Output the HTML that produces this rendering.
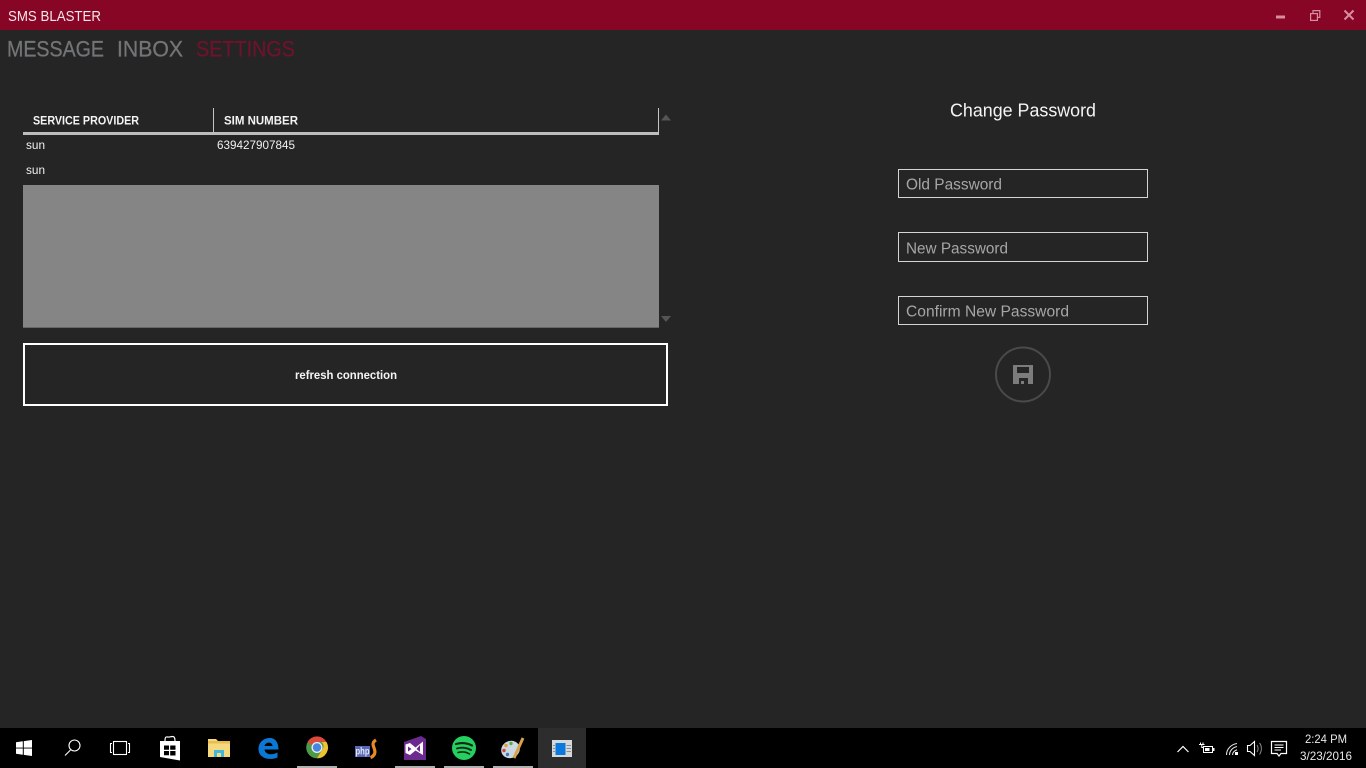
<!DOCTYPE html>
<html><head><meta charset="utf-8"><title>SMS BLASTER</title>
<style>
html,body{margin:0;padding:0;width:1366px;height:768px;overflow:hidden;background:#252525}
svg{display:block}
text{font-family:"Liberation Sans",sans-serif;white-space:pre}
</style></head>
<body>
<svg width="1366" height="768" viewBox="0 0 1366 768" xmlns="http://www.w3.org/2000/svg">
<rect width="1366" height="768" fill="#252525"/>
<!-- title bar -->
<rect width="1366" height="30" fill="#880625"/>
<text x="8" y="21" font-size="15" fill="#f8e6ea" textLength="93" lengthAdjust="spacingAndGlyphs">SMS BLASTER</text>
<rect x="1276" y="15.500" width="9" height="3" fill="#d88ca0"/>
<g fill="none" stroke="#d88ca0" stroke-width="1.200"><rect x="1310.600" y="13.600" width="6.800" height="6.800"/><path d="M1313 13V10.600H1319.800V17.400H1317.600"/></g>
<path d="M1344.500 10.500L1353.500 19.500M1353.500 10.500L1344.500 19.500" stroke="#d88ca0" stroke-width="2" fill="none"/>
<!-- nav -->
<g font-size="22" stroke-width="0.300">
<text x="7" y="56.500" fill="#727476" stroke="#727476" textLength="97" lengthAdjust="spacingAndGlyphs">MESSAGE</text>
<text x="117" y="56.500" fill="#727476" stroke="#727476" textLength="66" lengthAdjust="spacingAndGlyphs">INBOX</text>
<text x="196" y="56.500" fill="#6e132b" stroke="#6e132b" textLength="99" lengthAdjust="spacingAndGlyphs">SETTINGS</text>
</g>
<!-- table -->
<rect x="23" y="132" width="636" height="3" fill="#bdbdbd"/>
<rect x="213" y="108" width="1" height="25" fill="#c4c4c4"/>
<rect x="658" y="108" width="1" height="26" fill="#c4c4c4"/>
<text x="33" y="124.500" font-size="12" font-weight="bold" fill="#f4f4f4" textLength="106" lengthAdjust="spacingAndGlyphs">SERVICE PROVIDER</text>
<text x="224" y="124.500" font-size="12" font-weight="bold" fill="#f4f4f4" textLength="74" lengthAdjust="spacingAndGlyphs">SIM NUMBER</text>
<text x="26" y="149" font-size="12" fill="#f0f0f0" textLength="19" lengthAdjust="spacingAndGlyphs">sun</text>
<text x="217" y="149" font-size="12" fill="#f0f0f0" textLength="78" lengthAdjust="spacingAndGlyphs">639427907845</text>
<text x="26" y="174" font-size="12" fill="#f0f0f0" textLength="19" lengthAdjust="spacingAndGlyphs">sun</text>
<rect x="23" y="185" width="636" height="142" fill="#858585"/>
<rect x="23" y="327" width="636" height="1" fill="#666"/>
<path d="M661 120.500L666 114.500L671 120.500Z" fill="#555"/>
<path d="M661 316L671 316L666 322Z" fill="#555"/>
<!-- refresh -->
<rect x="24" y="344" width="643" height="61" fill="none" stroke="#fff" stroke-width="2"/>
<text x="295" y="379" font-size="12" font-weight="bold" fill="#f4f4f4" textLength="102" lengthAdjust="spacingAndGlyphs">refresh connection</text>
<!-- change password -->
<text x="950" y="116.500" font-size="18" fill="#f4f4f4" textLength="146" lengthAdjust="spacingAndGlyphs">Change Password</text>
<g fill="none" stroke="#d4d4d4" stroke-width="1">
<rect x="898.500" y="169.500" width="249" height="28"/>
<rect x="898.500" y="232.500" width="249" height="29"/>
<rect x="898.500" y="296.500" width="249" height="28"/>
</g>
<g font-size="15.500" fill="#a6a6a6">
<text x="906" y="189.500" textLength="96" lengthAdjust="spacingAndGlyphs">Old Password</text>
<text x="906" y="253.500" textLength="102" lengthAdjust="spacingAndGlyphs">New Password</text>
<text x="906" y="316.500" textLength="163" lengthAdjust="spacingAndGlyphs">Confirm New Password</text>
</g>
<circle cx="1023" cy="374.500" r="27" fill="none" stroke="#4a4a4a" stroke-width="2"/>
<path fill-rule="evenodd" fill="#7c7c7c" d="M1013 365H1033V384H1013ZM1017 367V373H1029V367ZM1019 378V384H1028V378ZM1021 381H1024V384H1021Z"/>
<!-- taskbar -->
<rect y="728" width="1366" height="40" fill="#000"/>
<rect x="538" y="728" width="48" height="40" fill="#2d2d2d"/>
<g fill="#b0b0b0"><rect x="297" y="766" width="40" height="2"/><rect x="395" y="766" width="40" height="2"/><rect x="444" y="766" width="40" height="2"/><rect x="493" y="766" width="40" height="2"/></g>
<!-- start -->
<path fill="#fff" d="M16 742.300L22.800 741.300V747.600H16ZM23.800 741.100L32 740V747.600H23.800ZM16 748.500H22.800V754.800L16 753.800ZM23.800 748.500H32V756L23.800 754.900Z"/>
<!-- search -->
<g fill="none" stroke="#fff" stroke-width="1.100"><circle cx="74.500" cy="745.500" r="5.500"/><path d="M70.500 750L65 755.500"/></g>
<!-- task view -->
<g fill="none" stroke="#fff" stroke-width="1.100"><rect x="113.500" y="741.500" width="13" height="13"/><path d="M112 743.500H110.500V752.500H112M128 743.500H129.500V752.500H128"/></g>
<!-- store -->
<path fill="#fff" d="M160 741H180V760.500L160 757Z"/>
<path fill="none" stroke="#fff" stroke-width="1.200" d="M165 741C165 735 167 737.500 169.500 737C172 736.500 175 735 175 741"/>
<path fill="#000" d="M164 745.500H169V749.800H164ZM170.200 745.500H175.500V749.800H170.200ZM164 751H169V755.200H164ZM170.200 751H175.500V755.500H170.200Z"/>
<!-- explorer -->
<path fill="#f4d97e" d="M208 739H216L218 741H230V757H208Z"/>
<rect x="208" y="741" width="22" height="2.500" fill="#e9bd4f"/>
<path fill="#40b8dc" d="M214 757V750H224V757H221V753H217V757Z"/>
<!-- edge -->
<path fill="#0a78d4" d="M258.500 749C258.500 742 264 738 270 738C275 738 278.500 742 278.500 749.500H264.500C265 754 271 756 277.500 752.500V757.500C269 761 258.500 758 258.500 749ZM264.500 746H272.500C272.500 741.500 265.500 741.500 264.500 746Z" fill-rule="evenodd"/>
<!-- chrome -->
<circle cx="317" cy="747.500" r="10.800" fill="#4c9a45"/>
<path fill="#dd4a3b" d="M307.500 742A10.800 10.800 0 0 1 326.500 742H317A5.500 5.500 0 0 0 312 745Z"/>
<path fill="#f0c22f" d="M326.500 742A10.800 10.800 0 0 1 317 758.300L322 750A5.500 5.500 0 0 0 321.500 742Z"/>
<circle cx="317" cy="747.500" r="5.500" fill="#e8eef8"/><circle cx="317" cy="747.500" r="4.200" fill="#4a86e0"/>
<!-- php -->
<rect x="355" y="746" width="15" height="11" fill="#5a6ab8"/>
<text x="355.500" y="754.500" font-size="10" font-weight="bold" fill="#e6e8f6" textLength="14" lengthAdjust="spacingAndGlyphs">php</text>
<path fill="none" stroke="#e98a24" stroke-width="3.200" d="M376 740C369 744 377 749 374.500 754C373.500 756 372 757 370.500 757.500"/>
<!-- VS -->
<path fill="#6c2a8e" d="M404 742L421 736L426 739V760H404Z"/>
<path fill="#fff" fill-rule="evenodd" d="M405.500 744.500L410 743L415.500 747.500L423 741.500V755L415.500 750.500L410 755L405.500 753ZM408 746.500V751.500L411.500 749ZM420 745L416.500 749L420 752Z"/>
<!-- spotify -->
<circle cx="464" cy="748" r="12" fill="#25d05f"/>
<g fill="none" stroke="#0c2a16" stroke-linecap="round"><path stroke-width="2.200" d="M456 744C461 742.500 467 743 472 745.500"/><path stroke-width="1.900" d="M457 748.500C461.500 747 467 747.800 471 750"/><path stroke-width="1.600" d="M458 752.500C462 751.500 466.500 752 469.500 754"/></g>
<!-- paint -->
<ellipse cx="510.500" cy="749.500" rx="9.500" ry="8.500" fill="#cdd9e2" transform="rotate(-25 510.500 749.500)"/>
<circle cx="506" cy="745.500" r="1.700" fill="#e0a030"/><circle cx="511" cy="743.500" r="1.700" fill="#5fa84a"/><circle cx="504" cy="750.500" r="1.700" fill="#d0453a"/><circle cx="507.500" cy="754.500" r="1.700" fill="#3a78c8"/>
<path d="M523 738L514 758" stroke="#d8a24a" stroke-width="3"/>
<!-- app -->
<rect x="552" y="740" width="20" height="17" fill="#d5d9dc"/>
<rect x="555.500" y="743" width="10" height="12" fill="#0a78dc"/>
<g fill="#8a8f95"><rect x="553" y="745" width="2" height="1"/><rect x="553" y="748" width="2" height="1"/><rect x="553" y="751" width="2" height="1"/><rect x="566.500" y="745" width="4.500" height="1"/><rect x="566.500" y="748" width="4.500" height="1"/><rect x="566.500" y="751" width="4.500" height="1"/></g>
<!-- tray -->
<path d="M1177.500 752L1183 746.500L1188.500 752" fill="none" stroke="#fff" stroke-width="1.200"/>
<rect x="1203.500" y="746.500" width="9" height="6" fill="none" stroke="#fff" stroke-width="1"/>
<rect x="1205" y="748" width="4.500" height="3" fill="#fff"/><rect x="1213" y="748" width="1.500" height="3" fill="#fff"/>
<path d="M1199 744.500H1204.500M1200.500 742.500V744.500M1203 742.500V744.500M1201.800 744.500V747.500H1203.500" fill="none" stroke="#fff" stroke-width="1"/>
<g fill="none" stroke="#ddd" stroke-width="1.100"><path d="M1226.500 755C1226.500 749 1231 744.500 1237 743.500"/><path d="M1229.500 755C1229.500 751 1232.500 747.500 1237 746.500"/><path d="M1232.500 755C1232.500 752.500 1234.500 750.500 1237 749.800"/></g>
<rect x="1235" y="752" width="3" height="3" fill="#fff"/>
<g fill="none" stroke="#fff" stroke-width="1.100"><path d="M1247.500 745.500H1250L1254.500 741.500V755.500L1250 751.500H1247.500Z"/></g>
<g fill="none" stroke="#888" stroke-width="1"><path d="M1257 745C1258.500 747 1258.500 750 1257 752"/><path d="M1259.500 743C1262 746 1262 751 1259.500 754.500"/></g>
<path d="M1271.500 741.500H1286.500V753.500H1281L1279 756L1277 753.500H1271.500Z" fill="none" stroke="#fff" stroke-width="1.200"/>
<path d="M1274.500 745H1283.500M1274.500 747.500H1283.500M1274.500 750H1281" stroke="#fff" stroke-width="1"/>
<text x="1305" y="743" font-size="12" fill="#e8e8e8" textLength="42" lengthAdjust="spacingAndGlyphs">2:24 PM</text>
<text x="1300" y="760" font-size="12" fill="#e8e8e8" textLength="52" lengthAdjust="spacingAndGlyphs">3/23/2016</text>
</svg>
</body></html>
